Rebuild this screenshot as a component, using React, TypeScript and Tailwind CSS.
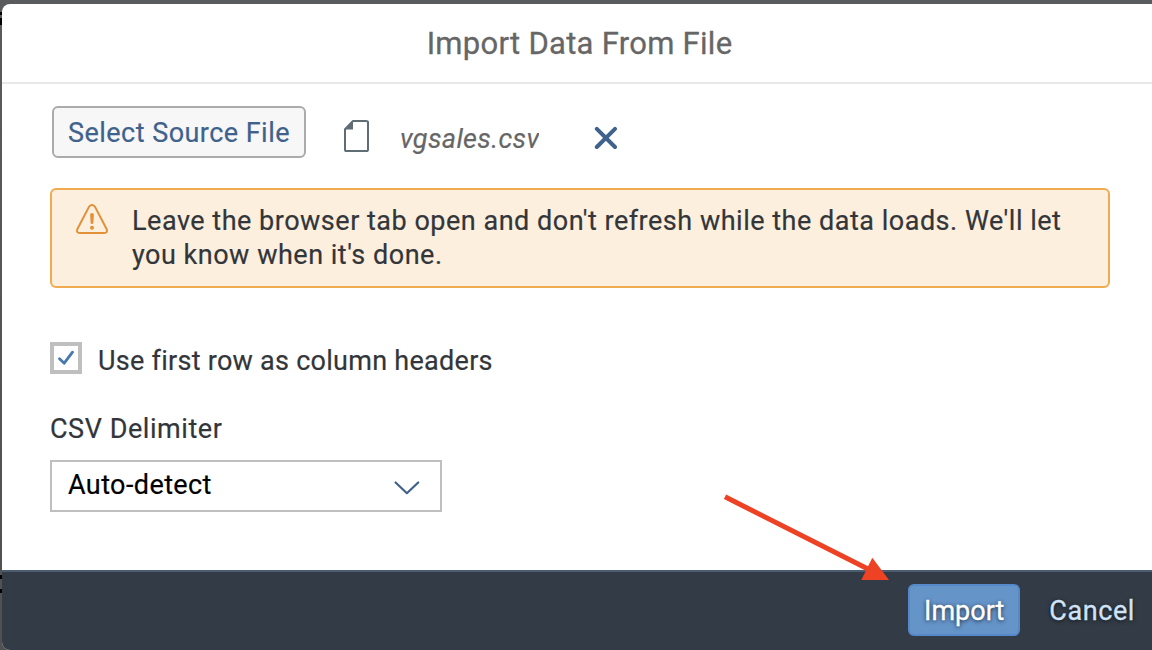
import React from 'react';

function FileIcon() {
  return (
    <svg className="ml-[38px] mt-[13px] shrink-0" width="26" height="34" viewBox="0 0 26 34" fill="none">
      <path d="M9 2H21.8Q24 2 24 3.2V30.4Q24 32 22.4 32H2.4Q1 32 1 30.4V10.2Z" stroke="#5f6e74" strokeWidth="2" strokeLinejoin="round" />
      <path d="M9 1.4V10.6H.8Z" fill="#5f6e74" />
    </svg>
  );
}

function CloseIcon() {
  return (
    <svg className="ml-[55px] mt-[20px] shrink-0" width="24" height="24" viewBox="0 0 24 24" fill="none">
      <path d="M2.8 2.8L21 21M21 2.8L2.8 21" stroke="#3f628c" strokeWidth="4" strokeLinecap="round" />
    </svg>
  );
}

function WarningIcon() {
  return (
    <svg className="mt-[14px] ml-6 shrink-0" width="34" height="32" viewBox="0 0 34 32" fill="none">
      <path d="M13.1 2.6Q16 -.6 18.9 2.6L30.6 25Q32 28.8 28.2 29H3.8Q0 28.8 1.4 25Z" stroke="#e0913a" strokeWidth="2" strokeLinejoin="round" />
      <path d="M14.1 10.7Q14.1 9.1 16 9.1T17.9 10.7L17.4 18.8Q17.2 20 16 20T14.6 18.8Z" fill="#e0913a" />
      <circle cx="16" cy="23.8" r="2" fill="#e0913a" />
    </svg>
  );
}

export default function App() {
  return (
    <div className="relative h-[650px] overflow-hidden bg-gradient-to-b from-[#5a5b5d] via-[#555555] to-[#515151] pt-1 pl-0.5 font-['Roboto',sans-serif] text-[27px] leading-[34px] text-[#32363a]">
      <div className="absolute top-[12px] left-0 h-[3px] w-0.5 bg-black" />
      <div className="absolute top-[18px] left-0 h-[7px] w-0.5 bg-black" />
      <div className="absolute top-[575px] left-0 h-[4px] w-0.5 bg-black" />
      <div className="absolute top-[589px] left-0 h-[4px] w-0.5 bg-black" />

      <div className="relative flex h-[646px] flex-col overflow-hidden rounded-l-[8px] bg-white">
        <header className="flex h-20 shrink-0 items-center justify-center border-b-2 border-[#e8e8e8] pt-[2px] pl-[5px]">
          <h1 className="whitespace-nowrap text-[31px] leading-10 tracking-[0.28px] text-[#666666] [-webkit-text-stroke:0.3px]">Import Data From File</h1>
        </header>

        <main className="flex h-[486px] shrink-0 flex-col px-12 [-webkit-text-stroke:0.2px]">
          <div className="mt-[22px] flex h-[52px] items-start pl-0.5">
            <button className="h-[52px] w-[254px] shrink-0 rounded-[6px] border-2 border-[#ababab] bg-[#f7f7f7] pt-[2px] whitespace-nowrap tracking-[0.46px] text-[#3f628c]">
              Select Source File
            </button>
            <FileIcon />
            <div className="ml-[30px] mt-[16px] w-[139px] overflow-hidden whitespace-nowrap tracking-[0.35px] italic text-[#666666]">vgsales.csv</div>
            <CloseIcon />
          </div>

          <div className="mt-[30px] flex h-[100px] w-[1060px] shrink-0 rounded-[6px] border-2 border-[#f0ab50] bg-[#fdefdd]">
            <WarningIcon />
            <p className="ml-[22px] mt-[14px] whitespace-nowrap tracking-[0.51px]">
              Leave the browser tab open and don't refresh while the data loads. We'll let
              <br />
              you know when it's done.
            </p>
          </div>

          <label className="mt-[54px] flex h-8 items-center">
            <span className="flex size-8 items-center justify-center border-4 border-[#bfbfbf] bg-white">
              <svg width="18" height="18" viewBox="0 0 18 18" fill="none">
                <path d="M2.5 9.8L7.2 14.2L15.5 3.2" stroke="#4878ad" strokeWidth="2.8" strokeLinecap="round" strokeLinejoin="round" />
              </svg>
            </span>
            <span className="mt-[5px] ml-4 whitespace-nowrap tracking-[0.27px]">Use first row as column headers</span>
          </label>

          <div className="mt-[38px] whitespace-nowrap tracking-[0.55px]">CSV Delimiter</div>
          <div className="mt-[14px] flex h-[52px] w-[392px] items-center justify-between border-2 border-[#bfbfbf] pr-5 pl-4 text-black">
            <span className="-mt-[3px] tracking-[0.4px]">Auto-detect</span>
            <svg className="mt-[4px]" width="26" height="14" viewBox="0 0 26 14" fill="none">
              <path d="M1.6 1.5L12.9 12.2L24.2 1.5" stroke="#3f628c" strokeWidth="2.2" strokeLinecap="round" strokeLinejoin="round" />
            </svg>
          </div>
        </main>

        <footer className="flex h-20 shrink-0 justify-end border-t-2 border-[#4b5d70] bg-[#333c46] pt-3 pr-[17px] [-webkit-text-stroke:0.3px]">
          <button className="h-[52px] w-[112px] rounded-[6px] border-2 border-[#5689c9] bg-[#6594c9] pt-[2px] text-white [text-shadow:0_1px_4px_rgba(0,0,0,0.8)]">
            Import
          </button>
          <button className="ml-[29px] h-[52px] pt-[2px] tracking-[0.6px] text-[#d0e3f8] [text-shadow:0_1px_4px_rgba(0,0,0,0.8)]">Cancel</button>
        </footer>

        <svg className="pointer-events-none absolute top-[488px] left-[718px]" width="176" height="96" viewBox="720 492 176 96">
          <path d="M725 496.8L868 569" stroke="#ee4225" strokeWidth="5" />
          <path d="M872.3 557.8L889 580H861.3Z" fill="#ee4225" />
        </svg>
      </div>
    </div>
  );
}
